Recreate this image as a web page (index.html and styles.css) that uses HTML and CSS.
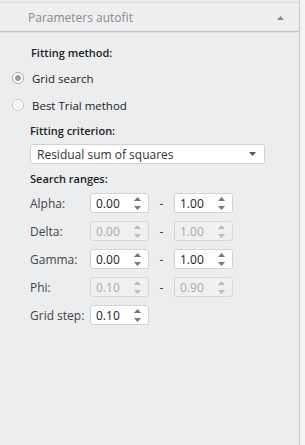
FILE: index.html
```html
<!DOCTYPE html>
<html lang="en">
<head>
    <meta charset="UTF-8">
    <title>Parameters autofit</title>
    <link rel="stylesheet" href="styles.css">
</head>
<body>
    <div class="panel">
        <div class="panel-header">
            <span class="panel-title">Parameters autofit</span>
            <svg class="collapse-icon" width="7" height="4" viewBox="0 0 7 4"><path d="M0 4 L3.5 0 L7 4 Z" fill="#8a8a8a"/></svg>
        </div>

        <div class="panel-body">
            <div class="section-title">Fitting method:</div>

            <label class="radio-row">
                <span class="radio checked"><span class="dot"></span></span>
                <span>Grid search</span>
            </label>
            <label class="radio-row">
                <span class="radio"><span class="dot"></span></span>
                <span>Best Trial method</span>
            </label>

            <div class="sub">
                <div class="section-title criterion">Fitting criterion:</div>
                <div class="select">
                    <span>Residual sum of squares</span>
                    <svg width="7" height="4" viewBox="0 0 7 4"><path d="M0 0 L7 0 L3.5 4 Z" fill="#555"/></svg>
                </div>

                <div class="section-title ranges">Search ranges:</div>

                <div class="range-row">
                    <span class="range-label">Alpha:</span>
                    <div class="spin"><span>0.00</span><span class="arrows"><svg width="7" height="13" viewBox="0 0 7 13"><path d="M0 4 L3.5 0 L7 4 Z M0 9 L7 9 L3.5 13 Z" fill="#777"/></svg></span></div>
                    <span class="dash">-</span>
                    <div class="spin"><span>1.00</span><span class="arrows"><svg width="7" height="13" viewBox="0 0 7 13"><path d="M0 4 L3.5 0 L7 4 Z M0 9 L7 9 L3.5 13 Z" fill="#777"/></svg></span></div>
                </div>
                <div class="range-row disabled">
                    <span class="range-label">Delta:</span>
                    <div class="spin"><span>0.00</span><span class="arrows"><svg width="7" height="13" viewBox="0 0 7 13"><path d="M0 4 L3.5 0 L7 4 Z M0 9 L7 9 L3.5 13 Z" fill="#bbb"/></svg></span></div>
                    <span class="dash">-</span>
                    <div class="spin"><span>1.00</span><span class="arrows"><svg width="7" height="13" viewBox="0 0 7 13"><path d="M0 4 L3.5 0 L7 4 Z M0 9 L7 9 L3.5 13 Z" fill="#bbb"/></svg></span></div>
                </div>
                <div class="range-row">
                    <span class="range-label">Gamma:</span>
                    <div class="spin"><span>0.00</span><span class="arrows"><svg width="7" height="13" viewBox="0 0 7 13"><path d="M0 4 L3.5 0 L7 4 Z M0 9 L7 9 L3.5 13 Z" fill="#777"/></svg></span></div>
                    <span class="dash">-</span>
                    <div class="spin"><span>1.00</span><span class="arrows"><svg width="7" height="13" viewBox="0 0 7 13"><path d="M0 4 L3.5 0 L7 4 Z M0 9 L7 9 L3.5 13 Z" fill="#777"/></svg></span></div>
                </div>
                <div class="range-row disabled">
                    <span class="range-label">Phi:</span>
                    <div class="spin"><span>0.10</span><span class="arrows"><svg width="7" height="13" viewBox="0 0 7 13"><path d="M0 4 L3.5 0 L7 4 Z M0 9 L7 9 L3.5 13 Z" fill="#bbb"/></svg></span></div>
                    <span class="dash">-</span>
                    <div class="spin"><span>0.90</span><span class="arrows"><svg width="7" height="13" viewBox="0 0 7 13"><path d="M0 4 L3.5 0 L7 4 Z M0 9 L7 9 L3.5 13 Z" fill="#bbb"/></svg></span></div>
                </div>
                <div class="range-row">
                    <span class="range-label">Grid step:</span>
                    <div class="spin"><span>0.10</span><span class="arrows"><svg width="7" height="13" viewBox="0 0 7 13"><path d="M0 4 L3.5 0 L7 4 Z M0 9 L7 9 L3.5 13 Z" fill="#777"/></svg></span></div>
                </div>
            </div>
        </div>
    </div>
</body>
</html>
```

FILE: styles.css
```css
html, body {
    margin: 0;
    height: 100%;
}

body {
    font-family: "Open Sans", "Liberation Sans", sans-serif;
    font-size: 11px;
    color: #333;
    background: #f4f4f5;
    display: flex;
}

.panel {
    width: 299px;
    background: #ecedef;
    border-right: 1px solid #c8c8ca;
    padding-top: 2px;
    box-sizing: content-box;
}

.panel-header {
    height: 28px;
    border-top: 1px solid #dcdcde;
    border-bottom: 1px solid #c4c4c6;
    box-shadow: 0 1px 0 #e2e2e4;
    background: #eeeff1;
    display: flex;
    align-items: center;
    justify-content: space-between;
    padding: 0 15px 0 28px;
}

.panel-title {
    font-size: 12px;
    color: #8a8a8a;
}

.collapse-icon {
    margin-top: 2px;
}

.panel-body {
    padding: 13px 0 0 12px;
}

.section-title {
    font-weight: 600;
    font-size: 11px;
    line-height: 16px;
    padding-left: 19px;
    color: #222;
}

.radio-row {
    display: flex;
    align-items: center;
    height: 20px;
    margin-top: 7px;
    color: #222;
    font-size: 11.5px;
}

.radio {
    width: 12px;
    height: 12px;
    border: 1px solid #c6c6c6;
    border-radius: 50%;
    background: #fff;
    box-sizing: border-box;
    display: flex;
    align-items: center;
    justify-content: center;
    margin-right: 8px;
}

.radio .dot {
    width: 6px;
    height: 6px;
    border-radius: 50%;
    border: 1px solid #e4e4e4;
    box-sizing: border-box;
}

.radio.checked {
    border-color: #a8a8a8;
}

.radio.checked .dot {
    background: #999;
    border-color: #999;
}

.sub {
    padding-left: 18px;
}

.sub .section-title {
    padding-left: 0;
}

.criterion {
    margin-top: 8px;
}

.select {
    margin-top: 5px;
    width: 235px;
    height: 20px;
    box-sizing: border-box;
    background: #fff;
    border: 1px solid #d2d2d4;
    border-radius: 3px;
    display: flex;
    align-items: center;
    justify-content: space-between;
    padding: 0 8px 0 6px;
    font-size: 12px;
    color: #333;
}

.ranges {
    margin-top: 7px;
}

.range-row {
    display: flex;
    align-items: center;
    height: 20px;
    margin-top: 8px;
    font-size: 12px;
}

.ranges + .range-row {
    margin-top: 6px;
}

.range-label {
    width: 60px;
    color: #444;
}

.spin {
    width: 59px;
    height: 20px;
    box-sizing: border-box;
    background: #fff;
    border: 1px solid #d2d2d4;
    border-radius: 3px;
    display: flex;
    align-items: center;
    justify-content: space-between;
    padding: 0 7px 0 5px;
    color: #222;
}

.arrows {
    display: flex;
}

.dash {
    width: 25px;
    text-align: center;
    color: #333;
}

.disabled .spin {
    background: #eff0f2;
    border-color: #d8d8da;
    color: #aaa;
}
```
